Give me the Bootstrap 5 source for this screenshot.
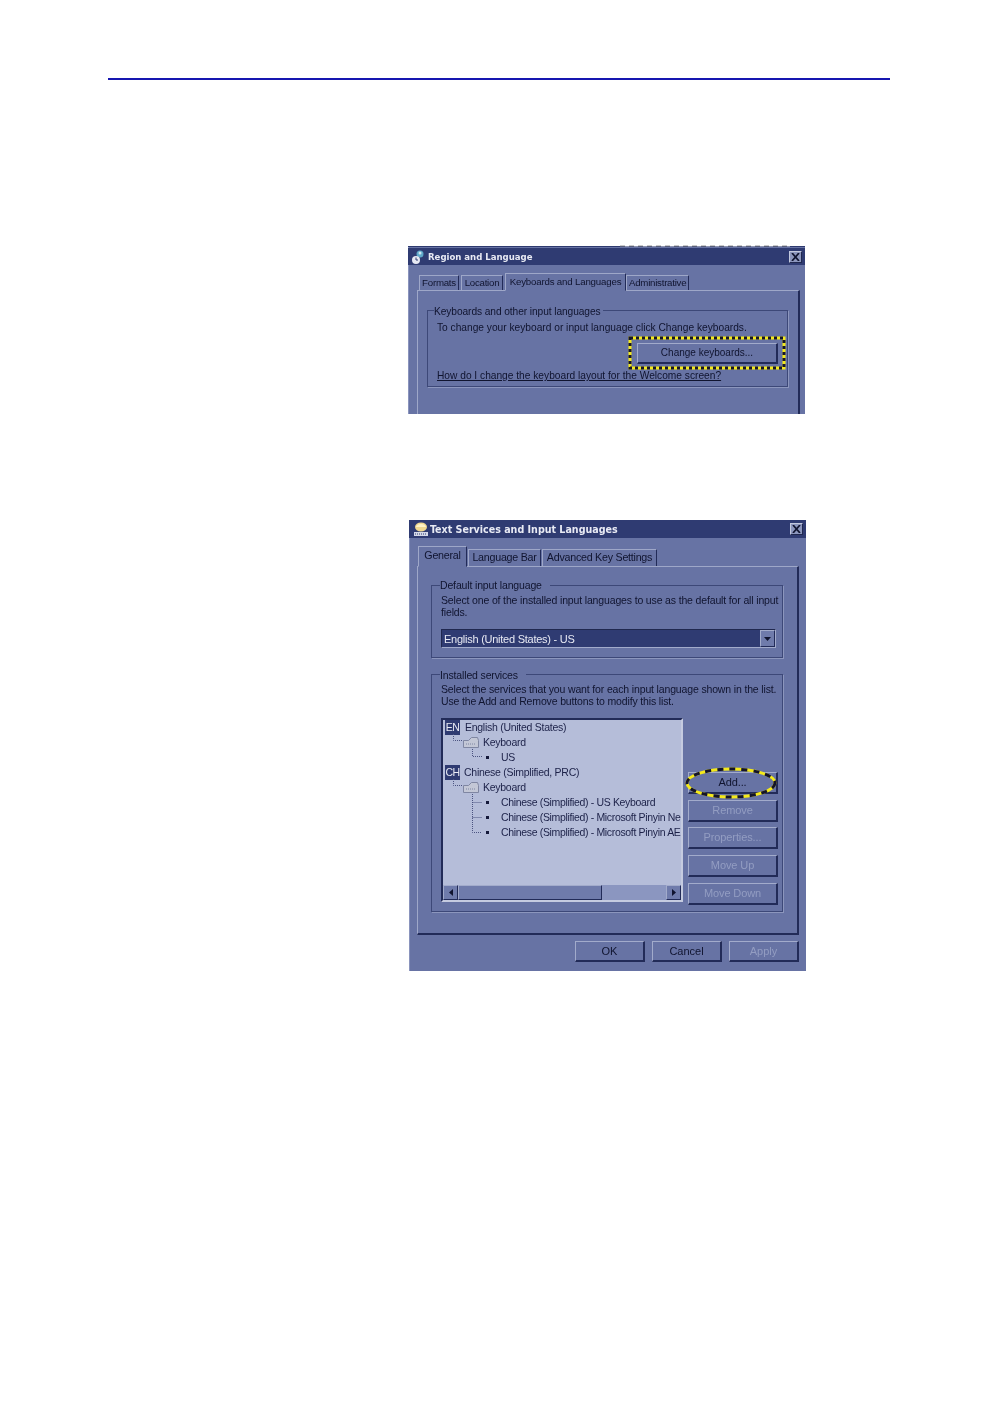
<!DOCTYPE html>
<html lang="en">
<head>
<meta charset="utf-8">
<title>Region and Language</title>
<link href="https://cdn.jsdelivr.net/npm/bootstrap@5.3.0/dist/css/bootstrap.min.css" rel="stylesheet">
<style>
html,body{background:#fff;margin:0}
.sheet{width:998px;height:1416px;overflow:hidden;font-family:"Liberation Sans",Arial,sans-serif;font-size:10.2px;line-height:12px;color:#10142f}
.toprule{height:2px;background:#1616b0;margin:78px 108px 0 108px}
.dlg{width:397px;background:#6773a4;position:relative;filter:blur(.3px);box-shadow:inset 1px 0 0 #8a94bd}
.dlg-a{margin:166px 0 0 408px;height:168px;border-top:1px solid #2e3a70}
.dlg-b{margin:106px 0 0 409px;height:451px}
.ttl{background:#2f3b72;color:#e8eaf4;font-weight:700;font-family:"DejaVu Sans Condensed","DejaVu Sans",sans-serif;font-stretch:condensed;display:flex;align-items:center;justify-content:space-between}
.dlg-a .ttl{height:17px;margin-top:1px;padding:0 3px;font-size:9.5px}
.dlg-b .ttl{height:18px;padding:0 3px 0 4px;font-size:10.6px}
.ttl-l{display:flex;align-items:center;gap:1px}
.xbtn{width:13px;height:12px;background:#8c96bd;border:1px solid #c3c9de;border-right-color:#20284f;border-bottom-color:#20284f;display:flex;align-items:center;justify-content:center}
.tabrow{display:flex;align-items:flex-end;height:25px;padding-left:11px;gap:2px}
.dlg-b .tabrow{height:28px;padding-left:9px;gap:1px}
.tb{height:15px;padding:0 2px;text-align:center;line-height:14px;background:#6773a4;border-top:1px solid #9ea7c8;border-left:1px solid #9ea7c8;border-right:1px solid #222b58;white-space:nowrap;font-size:9.7px;letter-spacing:-.25px}
.dlg-b .tb{height:17px;line-height:15px;font-size:10.7px}
.tb-on{height:18px;line-height:15px;padding:0 2px;margin-bottom:-1px;position:relative;z-index:1;border-bottom:1px solid #6773a4;letter-spacing:-.18px}
.dlg-b .tb-on{height:21px;line-height:16px;letter-spacing:-.25px}
.tabpanel{margin:0 5px 0 9px;border-top:1px solid #9ea7c8;border-left:1px solid #9ea7c8;border-right:2px solid #222b58}
.dlg-a .tabpanel{height:124px;padding:19px 10px 0 9px}
.dlg-b .tabpanel{margin:0 7px 0 8px;height:369px;padding:18px 14px 0 13px;border-bottom:2px solid #222b58}
.gbox{border:1px solid #3d4878;box-shadow:1px 1px 0 #8c96bd;position:relative}
.gtitle{position:absolute;left:6px;top:-5px;background:#6773a4;padding-right:2px}
.dlg-a .gbox{height:77px;padding:11px 0 0 9px}
.dlg-a .gtitle{letter-spacing:-.08px}
.btnrow{display:flex;justify-content:flex-end;margin:9px 9px 6px 0}
.wbtn{background:#6773a4;border:1px solid #a2abcb;border-right:2px solid #222b58;border-bottom:2px solid #222b58;text-align:center;color:#10142f}
.wbtn-off{color:#939dc2}
.wbtn-key{width:141px;height:21px;line-height:18px;font-size:10px}
.lnk{text-decoration:underline;color:#10142f;white-space:nowrap}
.dlg-b .gbox{font-size:10.5px}
.g1 .gtitle{top:-7px}
.g2 .gtitle{top:-6px}
.g1{height:73px;padding:8px 0 0 9px;margin-bottom:16px;letter-spacing:-.15px}
.g2{height:238px;padding:8px 0 0 9px;letter-spacing:-.15px}
.combo{height:19px;margin:11px 6px 0 0;border:1px solid #20284f;border-right-color:#a2abcb;border-bottom-color:#a2abcb;background:#2f3b72;color:#e8eaf4;display:flex;justify-content:space-between;align-items:center;padding-left:2px;font-size:11px;letter-spacing:-.25px}
.cbtn{width:15px;height:17px;background:#6f7bab;border:1px solid #a2abcb;border-right-color:#222b58;border-bottom-color:#222b58;display:flex;align-items:center;justify-content:center}
.svc{display:flex;margin-top:11px;gap:5px}
.tree{width:242px;height:184px;flex:none;background:#b5bdd9;border:2px solid #222b58;border-right-color:#c5cbe0;border-bottom-color:#c5cbe0;position:relative;display:flex;flex-direction:column}
.treebody{flex:1;overflow:hidden;white-space:nowrap;font-size:10.5px;letter-spacing:-.27px;color:#1c2148}
.node{height:15px;line-height:15px;display:flex;align-items:center}
.flag{width:15px;height:15px;background:#2f3b72;color:#e8eaf4;text-align:center;font-size:10.5px;letter-spacing:-.5px;margin:0 4px 0 2px;line-height:15px}
.flag-en{margin-right:5px}
.n2{padding-left:40px}
.n3{padding-left:43px;letter-spacing:-.34px}
.pip{width:3px;height:3px;background:#14183a;margin-right:12px;flex:none}
.clip{min-width:0;flex:none;width:181px;overflow:hidden}
.treelines{position:absolute;left:0;top:-1px}
.hsb{height:15px;background:#8b96c0;display:flex;flex:none}
.hsb-btn{width:15px;height:15px;background:#6f7bab;border:1px solid #a2abcb;border-right-color:#222b58;border-bottom-color:#222b58;display:flex;align-items:center;justify-content:center;flex:none}
.hsb-thumb{width:144px;background:#6f7bab;border-top:1px solid #a2abcb;border-left:1px solid #a2abcb;border-right:1px solid #222b58;border-bottom:1px solid #222b58;flex:none}
.hsb-gap{flex:1}
.sidebtns{display:flex;flex-direction:column;width:90px;padding-top:54px;font-size:11px;letter-spacing:-.1px}
.sidebtns .wbtn{height:22px;line-height:19px;margin-bottom:5.7px}
.over{position:absolute;pointer-events:none;overflow:visible}
.over-rect{left:220px;top:89px}
.over-ell{left:276px;top:247px}
.foot{display:flex;justify-content:flex-end;gap:7px;padding:6px 7px 0 0;font-size:11px}
.foot .wbtn{width:70px;height:21px;line-height:18px}
.smudge{position:absolute;left:212px;top:-2px;width:170px;height:2px;background:repeating-linear-gradient(90deg,#8a8a8a 0 5px,#fff 5px 9px);opacity:.45}
</style>
</head>
<body>
<div class="sheet">
<div class="toprule"></div>

<div class="dlg dlg-a">
  <div class="smudge"></div>
  <div class="ttl">
    <div class="ttl-l">
      <svg width="16" height="16" viewBox="0 0 16 16"><circle cx="9" cy="5" r="3.5" fill="#5fa8c8"/><circle cx="9" cy="4" r="1.5" fill="#cfe8f2"/><circle cx="5" cy="11" r="4" fill="#e6e8f2"/><path d="M5 8.5V11H7" stroke="#2f3b72" fill="none"/></svg>
      <span>Region and Language</span>
    </div>
    <div class="xbtn"><svg width="9" height="8" viewBox="0 0 9 8"><path d="M1 0L8 8M8 0L1 8" stroke="#10142f" stroke-width="1.7"/></svg></div>
  </div>
  <div class="tabrow">
    <div class="tb" style="width:40px">Formats</div>
    <div class="tb" style="width:42px">Location</div>
    <div class="tb tb-on" style="width:121px;margin-right:-2px">Keyboards and Languages</div>
    <div class="tb" style="width:63px">Administrative</div>
  </div>
  <div class="tabpanel">
    <div class="gbox">
      <div class="gtitle">Keyboards and other input languages</div>
      <div>To change your keyboard or input language click Change keyboards.</div>
      <div class="btnrow"><div class="wbtn wbtn-key">Change keyboards...</div></div>
      <div class="lnk">How do I change the keyboard layout for the Welcome screen?</div>
    </div>
  </div>
  <svg class="over over-rect" width="158" height="34" viewBox="0 0 158 34"><rect x="2" y="2" width="154" height="30" fill="none" stroke="#f5ea1a" stroke-width="3"/><rect x="2" y="2" width="154" height="30" fill="none" stroke="#14142a" stroke-width="3" stroke-dasharray="3 3"/></svg>
</div>

<div class="dlg dlg-b">
  <div class="ttl">
    <div class="ttl-l">
      <svg width="16" height="16" viewBox="0 0 16 16"><ellipse cx="8" cy="6" rx="6" ry="4.5" fill="#f0d890"/><path d="M3 6a5 3 0 0 1 10 0z" fill="#fff3c8"/><rect x="1" y="11" width="14" height="4" fill="#d5d9e8"/><path d="M2 13h12" stroke="#2f3b72" stroke-dasharray="1 1"/></svg>
      <span>Text Services and Input Languages</span>
    </div>
    <div class="xbtn"><svg width="9" height="8" viewBox="0 0 9 8"><path d="M1 0L8 8M8 0L1 8" stroke="#10142f" stroke-width="1.7"/></svg></div>
  </div>
  <div class="tabrow">
    <div class="tb tb-on" style="width:49px">General</div>
    <div class="tb" style="width:73px">Language Bar</div>
    <div class="tb" style="width:115px">Advanced Key Settings</div>
  </div>
  <div class="tabpanel">
    <div class="gbox g1">
      <div class="gtitle" style="left:8px;padding-right:8px">Default input language</div>
      <div>Select one of the installed input languages to use as the default for all input fields.</div>
      <div class="combo"><span>English (United States) - US</span><div class="cbtn"><svg width="7" height="4" viewBox="0 0 7 4"><path d="M0 0H7L3.5 4z" fill="#10142f"/></svg></div></div>
    </div>
    <div class="gbox g2">
      <div class="gtitle" style="left:8px;padding-right:8px">Installed services</div>
      <div>Select the services that you want for each input language shown in the list.<br>Use the Add and Remove buttons to modify this list.</div>
      <div class="svc">
        <div class="tree">
          <div class="treebody">
            <div class="node"><span class="flag flag-en">EN</span>English (United States)</div>
            <div class="node n2">Keyboard</div>
            <div class="node n3"><span class="pip"></span>US</div>
            <div class="node"><span class="flag">CH</span>Chinese (Simplified, PRC)</div>
            <div class="node n2">Keyboard</div>
            <div class="node n3"><span class="pip"></span>Chinese (Simplified) - US Keyboard</div>
            <div class="node n3"><span class="pip"></span><span class="clip">Chinese (Simplified) - Microsoft Pinyin Ne</span></div>
            <div class="node n3"><span class="pip"></span><span class="clip">Chinese (Simplified) - Microsoft Pinyin AE</span></div>
          </div>
          <svg class="treelines over" width="240" height="130" viewBox="0 0 240 130">
            <g fill="none" stroke="#4b5380" stroke-dasharray="1 1">
              <path d="M10.500 15V21.500H19M29.500 28V37.500H39"/>
              <path d="M10.500 60V66.500H19M29.500 73V113.500H39M29.500 83.500H39M29.500 98.500H39"/>
            </g>
            <g fill="#c3c7d6" stroke="#7f86a2">
              <path d="M20.500 21.500h5l3-3h6l1 3v7h-15z"/><path d="M23 25h10" stroke-dasharray="1 1"/>
              <path d="M20.500 66.500h5l3-3h6l1 3v7h-15z"/><path d="M23 70h10" stroke-dasharray="1 1"/>
            </g>
          </svg>
          <div class="hsb">
            <div class="hsb-btn"><svg width="4" height="7" viewBox="0 0 4 7"><path d="M4 0V7L0 3.500z" fill="#10142f"/></svg></div>
            <div class="hsb-thumb"></div>
            <div class="hsb-gap"></div>
            <div class="hsb-btn"><svg width="4" height="7" viewBox="0 0 4 7"><path d="M0 0V7L4 3.500z" fill="#10142f"/></svg></div>
          </div>
        </div>
        <div class="sidebtns">
          <div class="wbtn">Add...</div>
          <div class="wbtn wbtn-off">Remove</div>
          <div class="wbtn wbtn-off">Properties...</div>
          <div class="wbtn wbtn-off">Move Up</div>
          <div class="wbtn wbtn-off">Move Down</div>
        </div>
      </div>
    </div>
  </div>
  <div class="foot">
    <div class="wbtn">OK</div>
    <div class="wbtn">Cancel</div>
    <div class="wbtn wbtn-off">Apply</div>
  </div>
  <svg class="over over-ell" width="92" height="32" viewBox="0 0 92 32"><ellipse cx="46" cy="16" rx="44" ry="14" fill="none" stroke="#f5ea1a" stroke-width="3"/><ellipse cx="46" cy="16" rx="44" ry="14" fill="none" stroke="#14142a" stroke-width="3" stroke-dasharray="6 6"/></svg>
</div>
</div>
<script src="https://cdn.jsdelivr.net/npm/bootstrap@5.3.0/dist/js/bootstrap.bundle.min.js"></script>
</body>
</html>
